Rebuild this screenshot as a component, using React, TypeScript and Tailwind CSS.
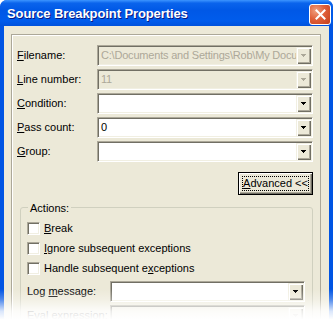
import React from "react";

const sunken =
  "border border-t-[#ACA899] border-l-[#ACA899] border-b-white border-r-white shadow-[inset_1px_1px_0_#716F64,inset_-1px_-1px_0_#F1EFE2]";

function Arrow({ disabled }: { disabled?: boolean }) {
  return (
    <svg width="7" height="4" viewBox="0 0 7 4" shapeRendering="crispEdges">
      <polygon points="1,0 6,0 3.5,3" fill={disabled ? "#ACA899" : "#000"} />
    </svg>
  );
}

function Combo({ value, disabled, className }: { value?: string; disabled?: boolean; className?: string }) {
  return (
    <div
      className={`flex h-[21px] min-w-0 ${sunken} ${disabled ? "bg-[#ECE9D8] text-[#ACA899]" : "bg-white text-black"} ${className ?? ""}`}
    >
      <div className="flex-1 min-w-0 flex items-center pl-[3px] pr-[1px] whitespace-nowrap overflow-hidden tracking-[-0.2px]">{value}</div>
      <div className="w-[15px] shrink-0 my-[1px] mr-[1px] flex items-center justify-center bg-[#ECE9D8] shadow-[inset_1px_1px_0_#F1EFE2,inset_2px_2px_0_#fff,inset_-1px_-1px_0_#716F64,inset_-2px_-2px_0_#ACA899]">
        <Arrow disabled={disabled} />
      </div>
    </div>
  );
}

function Row({ u, rest, children }: { u: string; rest: string; children: React.ReactNode }) {
  return (
    <div className="flex items-center h-[21px]">
      <div className="w-[80px] shrink-0">
        <u>{u}</u>
        {rest}
      </div>
      <div className="flex-1 min-w-0">{children}</div>
    </div>
  );
}

function Check({ children }: { children: React.ReactNode }) {
  return (
    <div className="flex items-center h-[20px]">
      <div className={`w-[13px] h-[13px] bg-white ${sunken}`} />
      <div className="ml-[4px]">{children}</div>
    </div>
  );
}

export default function App() {
  return (
    <div className="relative w-[333px] h-[323px] overflow-hidden bg-white font-['Tahoma','Liberation_Sans',Arial,sans-serif] text-[11px] text-black">
      <div className="flex flex-col w-[333px] h-[340px] rounded-t-[7px] overflow-hidden bg-[#0054E3]">
        {/* title bar */}
        <div className="h-[26px] shrink-0 flex items-center justify-between pl-[7px] pr-[2px] bg-[linear-gradient(to_bottom,#3D95FF_0%,#0A64EC_12%,#0058E6_40%,#005CEC_80%,#0052DC_100%)]">
          <span className="text-white font-bold text-[13px] tracking-[-0.1px] [text-shadow:1px_1px_0_#0A1883] font-['Trebuchet_MS','Liberation_Sans',Arial,sans-serif] mt-[2px]">
            Source Breakpoint Properties
          </span>
          <div className="w-[22px] h-[21px] mt-[3px] rounded-[3px] border border-white flex items-center justify-center bg-[radial-gradient(circle_at_30%_30%,#F0A080_0%,#E0603A_45%,#C43E1A_100%)]">
            <svg width="11" height="11" viewBox="0 0 11 11">
              <path d="M1.5 1.5 L9.5 9.5 M9.5 1.5 L1.5 9.5" stroke="#fff" strokeWidth="2" strokeLinecap="square" />
            </svg>
          </div>
        </div>
        {/* body */}
        <div className="flex-1 mx-[4px] bg-[#ECE9D8] pt-[8px] pl-[7px] pr-[8px]">
          <div className="h-[400px] border border-[#ACA899] shadow-[inset_1px_1px_0_#fff] pt-[10px] pl-[5px] pr-[7px] flex flex-col">
            <div className="flex flex-col gap-[3px]">
              <Row u="F" rest="ilename:">
                <Combo disabled value="C:\Documents and Settings\Rob\My Docu" />
              </Row>
              <Row u="L" rest="ine number:">
                <Combo disabled value="11" />
              </Row>
              <Row u="C" rest="ondition:">
                <Combo />
              </Row>
              <Row u="P" rest="ass count:">
                <Combo value="0" />
              </Row>
              <Row u="G" rest="roup:">
                <Combo />
              </Row>
            </div>
            <div className="flex justify-end mt-[10px]">
              <button className="w-[75px] h-[23px] border border-black bg-[#ECE9D8] p-[3px] shadow-[inset_1px_1px_0_#fff,inset_-1px_-1px_0_#716F64,inset_-2px_-2px_0_#ACA899]">
                <span className="flex items-center justify-center h-full border border-dotted border-black">
                  <u>A</u>dvanced &lt;&lt;
                </span>
              </button>
            </div>
            <div className="relative mt-[12px] ml-[3px] border border-[#D0D0BF] rounded-[3px] pt-[10px] pl-[6px] pr-[7px] h-[200px]">
              <div className="absolute -top-[8px] left-[7px] px-[2px] bg-[#ECE9D8]">Actions:</div>
              <Check>
                <u>B</u>reak
              </Check>
              <Check>
                <u>I</u>gnore subsequent exceptions
              </Check>
              <Check>
                Handle subsequent e<u>x</u>ceptions
              </Check>
              <div className="flex items-center h-[21px] mt-[3px]">
                <div className="w-[83px] shrink-0">
                  Log <u>m</u>essage:
                </div>
                <Combo className="flex-1" />
              </div>
              <div className="flex items-center h-[21px] mt-[3px]">
                <div className="w-[83px] shrink-0">
                  <u>E</u>val expression:
                </div>
                <Combo className="flex-1" disabled />
              </div>
            </div>
          </div>
        </div>
      </div>
      <div className="absolute left-0 right-0 bottom-0 h-[34px] bg-[linear-gradient(to_bottom,rgba(255,255,255,0)_0%,rgba(255,255,255,0.3)_30%,rgba(255,255,255,0.85)_65%,#fff_90%)]" />
    </div>
  );
}
